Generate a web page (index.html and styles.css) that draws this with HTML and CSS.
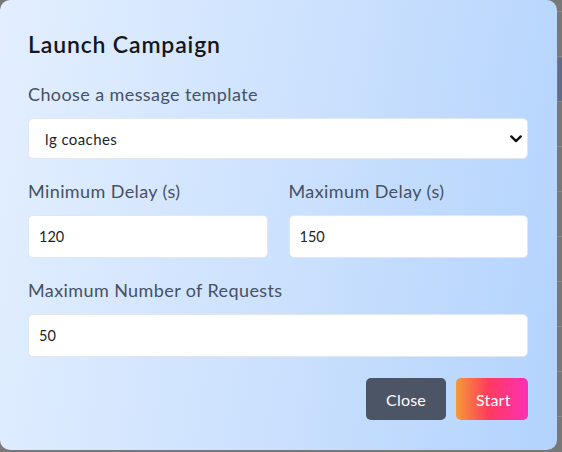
FILE: index.html
```html
<!DOCTYPE html>
<html lang="en">
<head>
<meta charset="utf-8">
<title>Launch Campaign</title>
<link rel="stylesheet" href="styles.css">
</head>
<body>
  <div class="modal">
    <h2 class="modal-title">Launch Campaign</h2>
    <div class="field">
      <label class="field-label" for="tpl">Choose a message template</label>
      <div class="select-wrap">
        <select id="tpl" class="control select">
          <option>lg coaches</option>
        </select>
        <svg class="chevron" width="12" height="8" viewBox="0 0 12 8" aria-hidden="true">
          <path d="M1.3 1.4 L6 6.1 L10.7 1.4" fill="none" stroke="#111" stroke-width="2.3" stroke-linecap="round" stroke-linejoin="round"/>
        </svg>
      </div>
    </div>
    <div class="field-row">
      <div class="field">
        <label class="field-label" for="min">Minimum Delay (s)</label>
        <input id="min" class="control input" type="text" value="120">
      </div>
      <div class="field">
        <label class="field-label" for="max">Maximum Delay (s)</label>
        <input id="max" class="control input" type="text" value="150">
      </div>
    </div>
    <div class="field">
      <label class="field-label" for="req">Maximum Number of Requests</label>
      <input id="req" class="control input" type="text" value="50">
    </div>
    <div class="actions">
      <button class="btn btn-close" type="button">Close</button>
      <button class="btn btn-start" type="button">Start</button>
    </div>
  </div>
</body>
</html>
```

FILE: styles.css
```css
* { box-sizing: border-box; }

html, body {
  margin: 0;
  padding: 0;
}

body {
  width: 562px;
  height: 452px;
  overflow: hidden;
  font-family: "Lato", "Open Sans", sans-serif;
  background-color: #787878;
  background-image:
    linear-gradient(#616c82, #616c82),
    linear-gradient(to bottom, #8a8a8a 0 1px, transparent 1px);
  background-repeat: no-repeat, repeat-y;
  background-position: 558px 58px, 0 146px;
  background-size: 4px 43px, 100% 45px;
}

.modal {
  width: 557px;
  height: 450px;
  border-radius: 10px;
  background: linear-gradient(100deg, #e3efff 0%, #cfe3fe 45%, #b3d3fd 100%);
  padding: 30px 29px 0 28px;
  display: flex;
  flex-direction: column;
  gap: 20px;
}

.modal-title {
  margin: 0 0 4px;
  font-size: 23px;
  line-height: 28px;
  font-weight: 600;
  color: #14161b;
  letter-spacing: 0.85px;
}

.field {
  display: flex;
  flex-direction: column;
  gap: 12px;
  min-width: 0;
}

.field-row {
  display: grid;
  grid-template-columns: 1fr 1fr;
  gap: 21px;
}

.field-label {
  font-size: 18px;
  line-height: 24px;
  color: #465163;
  letter-spacing: 0.4px;
}

.select-wrap {
  position: relative;
}

.chevron {
  position: absolute;
  right: 6px;
  top: 17px;
  pointer-events: none;
}

.control {
  display: block;
  width: 100%;
  background: #fff;
  border: 1px solid #e1e7ef;
  border-radius: 5px;
  font-family: inherit;
  color: #1b1f27;
  margin: 0;
  outline: none;
}

.select {
  -webkit-appearance: none;
  appearance: none;
  height: 41px;
  font-size: 15px;
  letter-spacing: 0.4px;
  padding: 0 24px 0 16px;
}

.input {
  height: 43px;
  font-size: 14.5px;
  padding: 0 10px;
}

.actions {
  display: flex;
  justify-content: flex-end;
  gap: 10px;
  margin-top: 1px;
}

.btn {
  height: 42px;
  border: 0;
  border-radius: 5px;
  color: #fff;
  font-family: inherit;
  font-size: 16px;
  letter-spacing: 0.2px;
  padding: 0 20px;
  cursor: pointer;
}

.btn-close {
  width: 80px;
  background: #4b5565;
}

.btn-start {
  width: 72px;
  background: linear-gradient(to right, #f49a36 0%, #ff3b5e 45%, #ff2fb6 100%);
}
```
